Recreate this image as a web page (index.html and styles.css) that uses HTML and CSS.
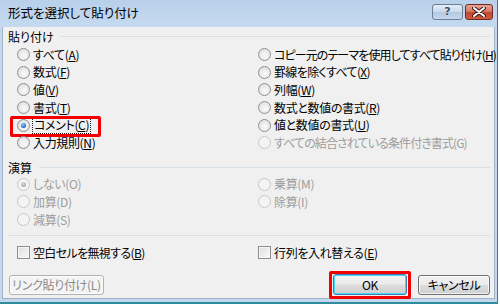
FILE: index.html
```html
<!DOCTYPE html>
<html lang="ja">
<head>
<meta charset="utf-8">
<title>形式を選択して貼り付け</title>
<link rel="stylesheet" href="styles.css">
</head>
<body>
<div class="window">
  <div class="titlebar">
    <span class="title">形式を選択して貼り付け</span>
    <div class="tbtns">
      <span class="tb help">?</span>
      <span class="tb close">
        <svg width="14" height="10" viewBox="0 0 14 10"><path d="M2 1 L12 9 M12 1 L2 9" stroke="#3a1a14" stroke-width="4" stroke-linecap="round"/><path d="M2 1 L12 9 M12 1 L2 9" stroke="#fff" stroke-width="2" stroke-linecap="round"/></svg>
      </span>
    </div>
  </div>
  <div class="client">
    <div class="glabel"><span>貼り付け</span><i></i></div>
    <div class="grid six">
      <label class="opt"><span class="radio"></span><span class="txt">すべて(<u>A</u>)</span></label>
      <label class="opt"><span class="radio"></span><span class="txt tight">コピー元のテーマを使用してすべて貼り付け(<u>H</u>)</span></label>
      <label class="opt"><span class="radio"></span><span class="txt">数式(<u>F</u>)</span></label>
      <label class="opt"><span class="radio"></span><span class="txt semi">罫線を除くすべて(<u>X</u>)</span></label>
      <label class="opt"><span class="radio"></span><span class="txt">値(<u>V</u>)</span></label>
      <label class="opt"><span class="radio"></span><span class="txt">列幅(<u>W</u>)</span></label>
      <label class="opt"><span class="radio"></span><span class="txt">書式(<u>T</u>)</span></label>
      <label class="opt"><span class="radio"></span><span class="txt">数式と数値の書式(<u>R</u>)</span></label>
      <label class="opt hl"><span class="radio on"></span><span class="txt focus">コメント(<u>C</u>)</span></label>
      <label class="opt"><span class="radio"></span><span class="txt">値と数値の書式(<u>U</u>)</span></label>
      <label class="opt"><span class="radio"></span><span class="txt">入力規則(<u>N</u>)</span></label>
      <label class="opt dis"><span class="radio"></span><span class="txt tight">すべての結合されている条件付き書式(G)</span></label>
    </div>
    <div class="glabel second"><span>演算</span><i></i></div>
    <div class="grid three">
      <label class="opt dis"><span class="radio on"></span><span class="txt">しない(O)</span></label>
      <label class="opt dis"><span class="radio"></span><span class="txt">乗算(M)</span></label>
      <label class="opt dis"><span class="radio"></span><span class="txt">加算(D)</span></label>
      <label class="opt dis"><span class="radio"></span><span class="txt">除算(I)</span></label>
      <label class="opt dis"><span class="radio"></span><span class="txt">減算(S)</span></label>
    </div>
    <div class="sep"></div>
    <div class="grid checks">
      <label class="opt"><span class="check"></span><span class="txt semi">空白セルを無視する(<u>B</u>)</span></label>
      <label class="opt"><span class="check"></span><span class="txt">行列を入れ替える(<u>E</u>)</span></label>
    </div>
    <div class="buttons">
      <span class="btn disabled link">リンク貼り付け(L)</span>
      <span class="grow"></span>
      <span class="btn default hl2">OK</span>
      <span class="btn cancel">キャンセル</span>
    </div>
  </div>
</div>
</body>
</html>
```
FILE: styles.css
```css
html, body {
  margin: 0;
  padding: 0;
}
body {
  width: 500px;
  height: 304px;
  overflow: hidden;
  background: #ffffff;
  font-family: "Noto Sans CJK JP", "Noto Sans", sans-serif;
  font-feature-settings: "palt" 1;
  font-size: 12px;
  color: #000;
}
.window {
  width: 497px;
  height: 302px;
  border-right: 1px solid #5d6e80;
  border-bottom: 2px solid #2e8c9d;
  background: #c3d8ee;
  display: flex;
  flex-direction: column;
}
.titlebar {
  height: 27px;
  flex: none;
  display: flex;
  align-items: center;
  padding-left: 8px;
  background: linear-gradient(#b8d0ea, #c5daef);
}
.title {
  font-size: 12.5px;
  line-height: 1;
  margin-top: -1px;
  letter-spacing: 0;
  color: #000;
}
.tbtns {
  margin-left: auto;
  margin-right: 4px;
  margin-top: -4px;
  display: flex;
  gap: 2px;
}
.tb {
  height: 16px;
  box-sizing: border-box;
  border: 1px solid #6d7f95;
  border-radius: 3px;
  display: flex;
  align-items: center;
  justify-content: center;
}
.help {
  width: 31px;
  background: linear-gradient(#e3edf8 0%, #c9d9ec 48%, #b4c8e0 52%, #c5d7ec 100%);
  color: #3e4e64;
  font-family: "DejaVu Sans", sans-serif;
  font-weight: bold;
  font-size: 11px;
  text-shadow: 0 0 1px #fff;
}
.close {
  width: 28px;
  border-color: #6e2b22;
  background: linear-gradient(#e8a393 0%, #d57a68 45%, #c2452f 55%, #cc5a3e 100%);
}
.client {
  flex: 1;
  margin: 0 2px 3px 2px;
  border: 1px solid #9fb2c6;
  border-top: none;
  background: #f0f0f0;
  display: flex;
  flex-direction: column;
}
.glabel {
  height: 16px;
  margin-top: 1px;
  display: flex;
  align-items: center;
  gap: 7px;
  padding-left: 5px;
  padding-right: 4px;
}
.glabel i {
  flex: 1;
  height: 1px;
  background: #d5dfe5;
}
.glabel.second {
  margin-top: 8px;
}
.grid {
  display: grid;
  grid-template-columns: 241px 1fr;
  grid-auto-rows: 17.6px;
  padding-left: 14px;
}
.six {
  margin-top: 2px;
}
.opt {
  justify-self: start;
  display: flex;
  align-items: center;
  gap: 3px;
  white-space: nowrap;
  line-height: 1;
}
.txt {
  letter-spacing: -0.35px;
}
.txt.semi {
  letter-spacing: -0.65px;
}
.txt.tight {
  letter-spacing: -0.9px;
}
.opt u {
  text-decoration-thickness: 1px;
  text-underline-offset: 1px;
}
.opt.dis {
  color: #9d9d9d;
}
.radio {
  width: 13px;
  height: 13px;
  flex: none;
  box-sizing: border-box;
  border-radius: 50%;
  border: 1px solid #8d9196;
  background: radial-gradient(circle at 55% 60%, #fbfbfb 0%, #e8e8e8 55%, #d2d2d2 100%);
  position: relative;
}
.radio.on::after {
  content: "";
  position: absolute;
  left: 3px;
  top: 3px;
  width: 5px;
  height: 5px;
  border-radius: 50%;
  background: radial-gradient(circle at 40% 35%, #8fd0ff 0%, #2a79d0 55%, #0b3f8c 100%);
}
.dis .radio {
  border-color: #c4c6c8;
  background: #f4f4f4;
}
.dis .radio.on::after {
  background: radial-gradient(circle at 40% 35%, #d8d8d8, #9a9a9a);
}
.focus {
  outline: 1px dotted #222;
  outline-offset: 0;
  padding: 1px 1px 2px 1px;
}
.hl {
  position: relative;
}
.hl::after {
  content: "";
  position: absolute;
  left: -7px;
  right: -11px;
  top: 0;
  bottom: -3px;
  border: 3px solid #f20000;
  border-radius: 2px;
}
.sep {
  height: 1px;
  background: #d5dfe5;
  margin: 7px 4px 0 5px;
}
.checks {
  margin-top: 8px;
  grid-auto-rows: 17px;
}
.check {
  width: 13px;
  height: 13px;
  flex: none;
  box-sizing: border-box;
  border: 1px solid #8f8f8f;
  background: linear-gradient(135deg, #dcdcdc, #fbfbfb);
  box-shadow: inset 0 0 0 1px #f4f4f4;
}
.buttons {
  display: flex;
  align-items: center;
  margin-top: 13px;
  padding-left: 6px;
  padding-right: 4px;
  gap: 11px;
}
.grow {
  flex: 1;
}
.btn {
  height: 20px;
  box-sizing: border-box;
  border: 1px solid #707070;
  border-radius: 3px;
  display: flex;
  align-items: center;
  justify-content: center;
  line-height: 1;
  letter-spacing: -0.3px;
  background: linear-gradient(#f2f2f2 0%, #ebebeb 49%, #dddddd 51%, #cfcfcf 100%);
  box-shadow: inset 0 0 0 1px rgba(255,255,255,0.7);
}
.link {
  width: 95px;
  border-color: #adb2b5;
  background: #f4f4f4;
  color: #8a8a8a;
}
.default {
  width: 74px;
  height: 21px;
  border-color: #3c7fb1;
  box-shadow: inset 0 0 0 1px #48d8fb;
  position: relative;
}
.hl2::after {
  content: "";
  position: absolute;
  left: -5px;
  right: -5px;
  top: -4px;
  bottom: -5px;
  border: 3px solid #f20000;
  border-radius: 2px;
}
.cancel {
  width: 72px;
}
```
